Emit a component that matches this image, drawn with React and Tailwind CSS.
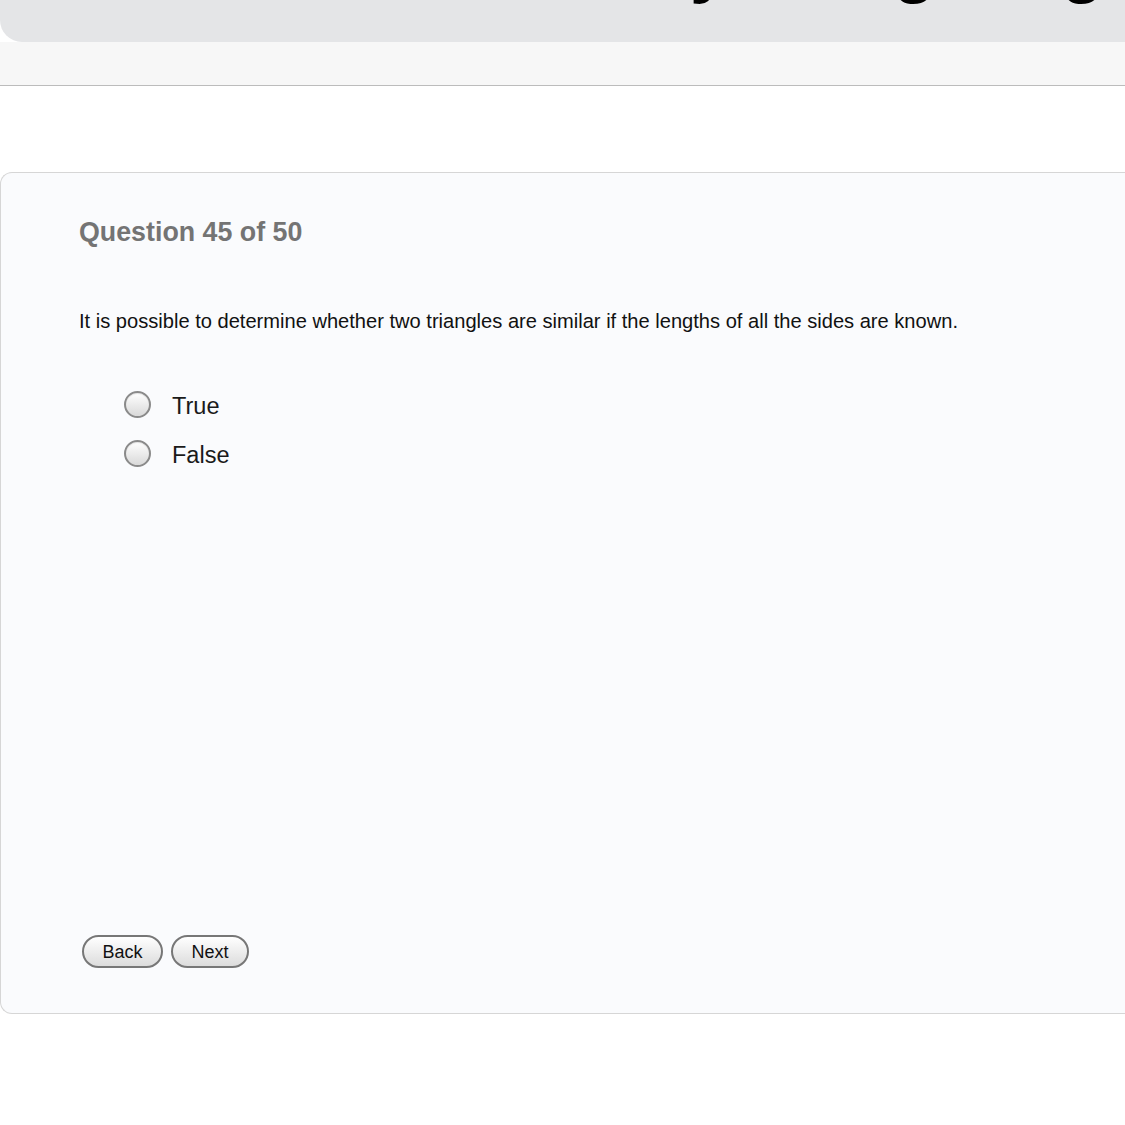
export default function App() {
    const radio = (label) => (
        <label className="flex items-center h-[49px]">
            <span className="w-[27px] h-[27px] rounded-full border-2 border-[#8a8a8a] bg-gradient-to-b from-[#ffffff] to-[#d9d9d9] shadow-[inset_0_1px_1px_rgba(0,0,0,0.1)]" />
            <span className="ml-[21px] pt-[5px] text-[23.5px] text-[#1a1a1a] leading-none">{label}</span>
        </label>
    );

    const btn = "h-[33px] rounded-full border-2 border-[#777] bg-gradient-to-b from-[#ffffff] to-[#dcdcdc] text-[18px] text-[#111] leading-none";

    return (
        <div className="w-[1125px] h-[1125px] bg-white overflow-hidden" style={{ fontFamily: "'Liberation Sans', Arial, sans-serif" }}>
            {/* header title is scrolled off, only descenders show */}
            <div className="h-[42px] bg-[#e4e5e7] rounded-bl-[22px] overflow-hidden relative text-[70px] font-bold text-black leading-none">
                <span className="absolute left-[690px] top-[-70px]">y</span>
                <span className="absolute left-[893px] top-[-70px]">g</span>
                <span className="absolute left-[1061px] top-[-70px]">g</span>
            </div>
            <div className="h-[44px] bg-[#f7f7f7] border-b border-[#bcbcbc]" />
            <div className="h-[86px]" />
            <div className="h-[842px] bg-[#fafbfd] border border-r-0 border-[#d6d6d6] rounded-l-[12px] pl-[78px] flex flex-col">
                <h1 className="mt-[46px] text-[26.8px] font-bold text-[#747474] leading-none">Question 45 of 50</h1>
                <p className="mt-[65px] text-[20.1px] text-[#111] leading-none">
                    It is possible to determine whether two triangles are similar if the lengths of all the sides are known.
                </p>
                <div className="mt-[49px] ml-[45px] flex flex-col">
                    {radio("True")}
                    {radio("False")}
                </div>
                <div className="mt-auto mb-[45px] ml-[3px] flex gap-[8px]">
                    <button className={`${btn} w-[81px]`}>Back</button>
                    <button className={`${btn} w-[78px]`}>Next</button>
                </div>
            </div>
        </div>
    );
}
